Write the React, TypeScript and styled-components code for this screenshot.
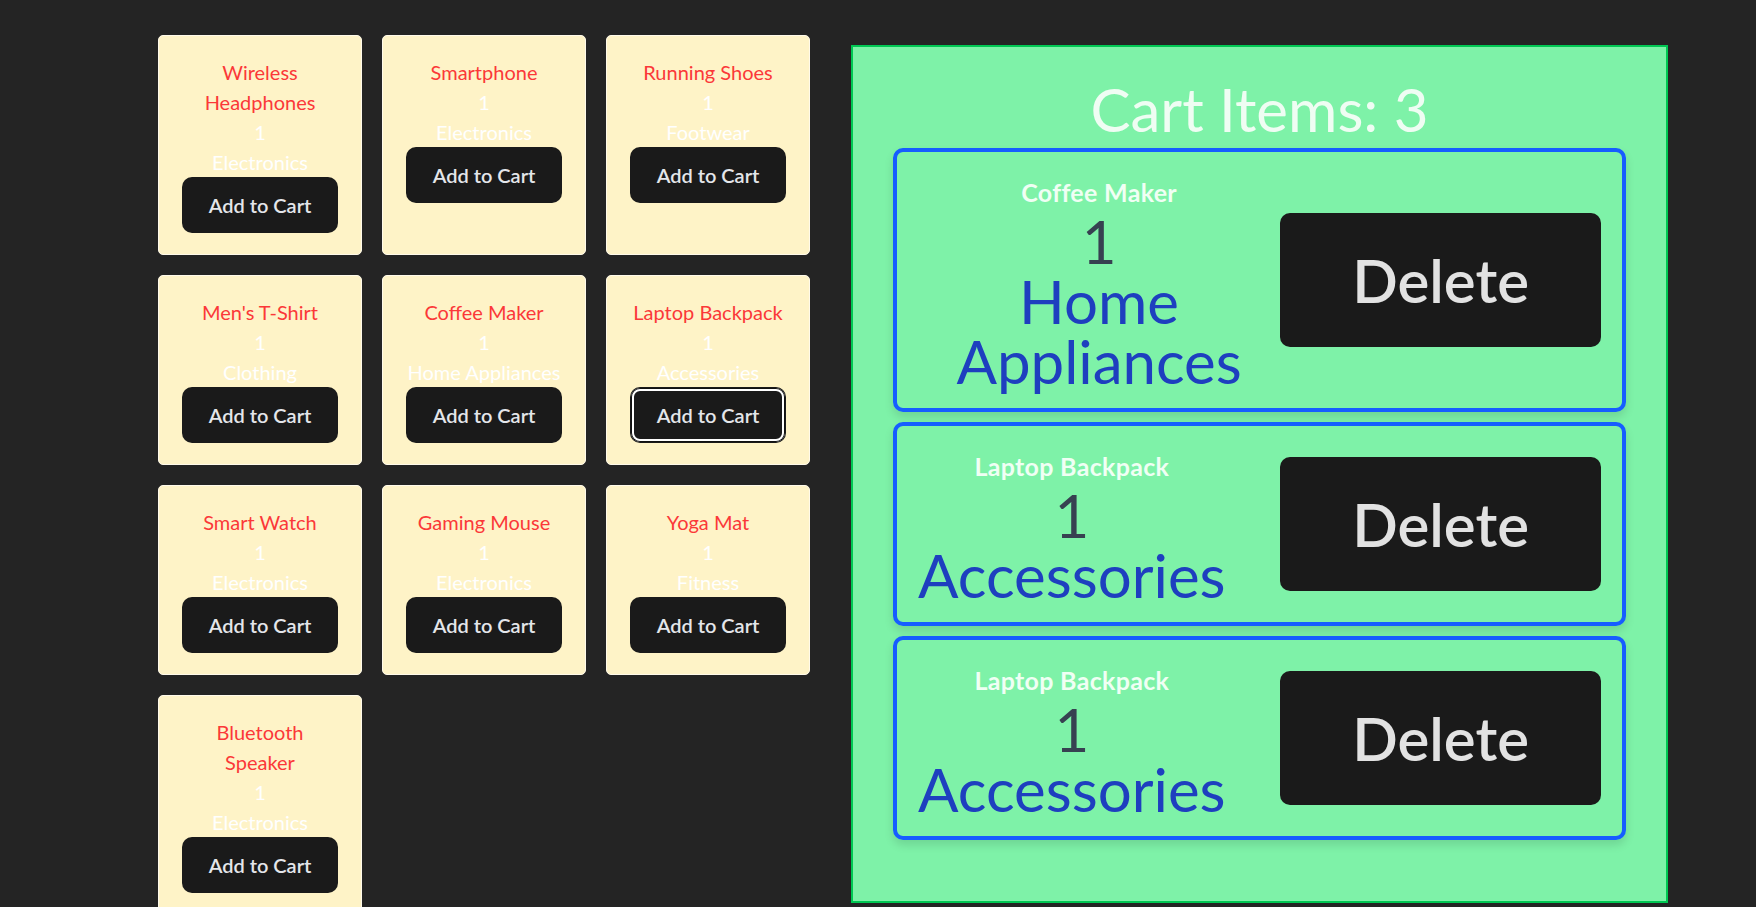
import React from "react";
import styled, { createGlobalStyle } from "styled-components";

const GlobalStyle = createGlobalStyle`
  html, body {
    margin: 0;
    overflow: hidden;
  }
  body {
    background: #242424;
    color: rgba(255, 255, 255, 0.87);
    font-family: Lato, "Noto Sans", sans-serif;
  }
`;

type Product = { name: string; qty: number; category: string };

const products: Product[] = [
  { name: "Wireless Headphones", qty: 1, category: "Electronics" },
  { name: "Smartphone", qty: 1, category: "Electronics" },
  { name: "Running Shoes", qty: 1, category: "Footwear" },
  { name: "Men's T-Shirt", qty: 1, category: "Clothing" },
  { name: "Coffee Maker", qty: 1, category: "Home Appliances" },
  { name: "Laptop Backpack", qty: 1, category: "Accessories" },
  { name: "Smart Watch", qty: 1, category: "Electronics" },
  { name: "Gaming Mouse", qty: 1, category: "Electronics" },
  { name: "Yoga Mat", qty: 1, category: "Fitness" },
  { name: "Bluetooth Speaker", qty: 1, category: "Electronics" },
];

const cart: Product[] = [
  { name: "Coffee Maker", qty: 1, category: "Home Appliances" },
  { name: "Laptop Backpack", qty: 1, category: "Accessories" },
  { name: "Laptop Backpack", qty: 1, category: "Accessories" },
];

const Page = styled.main`
  display: flex;
  align-items: flex-start;
  gap: 41px;
  padding: 35px 0 0 158px;
`;

const ProductGrid = styled.section`
  flex-shrink: 0;
  display: grid;
  grid-template-columns: repeat(3, 204px);
  gap: 20px;
`;

const Card = styled.div`
  box-sizing: border-box;
  display: flex;
  flex-direction: column;
  align-items: center;
  padding: 21px 23px;
  background: #fef3c7;
  border: 1px solid #fffaea;
  border-radius: 5px;
  text-align: center;
  font-size: 20px;
  line-height: 30px;
`;

const ProductName = styled.div`
  color: #fb3838;
`;

const ProductMeta = styled.div`
  color: #ffffff;
`;

const AddButton = styled.button<{ $focused?: boolean }>`
  font-family: Lato, "Noto Sans", sans-serif;
  font-size: 20px;
  font-weight: 600;
  line-height: 30px;
  padding: 12px 26px;
  border: 1px solid transparent;
  border-radius: 10px;
  background: #1a1a1a;
  color: #e4e6ea;
  cursor: pointer;
  white-space: nowrap;
  box-shadow: ${(p) =>
    p.$focused ? "inset 0 0 0 1px #111, inset 0 0 0 3px #ffffff" : "none"};
`;

const Cart = styled.section`
  box-sizing: border-box;
  width: 817px;
  margin-top: 10px;
  padding: 29px 40px 61px;
  background: #7ef2a8;
  border: 2px solid #00c853;
`;

const CartTitle = styled.h1`
  margin: 0 0 6px;
  font-size: 60px;
  font-weight: 400;
  line-height: 66px;
  text-align: center;
  color: #effdf3;
`;

const CartList = styled.div`
  display: flex;
  flex-direction: column;
  gap: 10px;
`;

const CartItem = styled.div`
  display: flex;
  align-items: center;
  justify-content: space-between;
  padding: 17px 21px;
  border: 4px solid #165dff;
  border-radius: 10px;
  box-shadow: 0 5px 10px rgba(0, 0, 0, 0.12);
`;

const ItemInfo = styled.div`
  display: flex;
  flex-direction: column;
  align-items: center;
  min-width: 0;
  padding-top: 11px;
  text-align: center;
`;

const ItemName = styled.div`
  margin-bottom: 7px;
  font-size: 25px;
  font-weight: 700;
  line-height: 24px;
  letter-spacing: 0.3px;
  color: #f0fff4;
`;

const ItemBig = styled.div<{ $tone: "qty" | "category" }>`
  font-size: 60px;
  line-height: 60px;
  color: ${(p) => (p.$tone === "qty" ? "#374151" : "#1e3fbf")};
`;

const DeleteButton = styled.button`
  flex-shrink: 0;
  font-family: Lato, "Noto Sans", sans-serif;
  font-size: 60px;
  font-weight: 600;
  line-height: 60px;
  padding: 36px 71px;
  border: 1px solid transparent;
  border-radius: 10px;
  background: #1a1a1a;
  color: #e2e2e2;
  cursor: pointer;
`;

export default function App() {
  return (
    <>
      <GlobalStyle />
      <Page>
        <ProductGrid>
          {products.map((p, i) => (
            <Card key={i}>
              <ProductName>{p.name}</ProductName>
              <ProductMeta>{p.qty}</ProductMeta>
              <ProductMeta>{p.category}</ProductMeta>
              <AddButton $focused={p.name === "Laptop Backpack"}>Add to Cart</AddButton>
            </Card>
          ))}
        </ProductGrid>
        <Cart>
          <CartTitle>Cart Items: {cart.length}</CartTitle>
          <CartList>
            {cart.map((c, i) => (
              <CartItem key={i}>
                <ItemInfo>
                  <ItemName>{c.name}</ItemName>
                  <ItemBig $tone="qty">{c.qty}</ItemBig>
                  <ItemBig $tone="category">{c.category}</ItemBig>
                </ItemInfo>
                <DeleteButton>Delete</DeleteButton>
              </CartItem>
            ))}
          </CartList>
        </Cart>
      </Page>
    </>
  );
}
